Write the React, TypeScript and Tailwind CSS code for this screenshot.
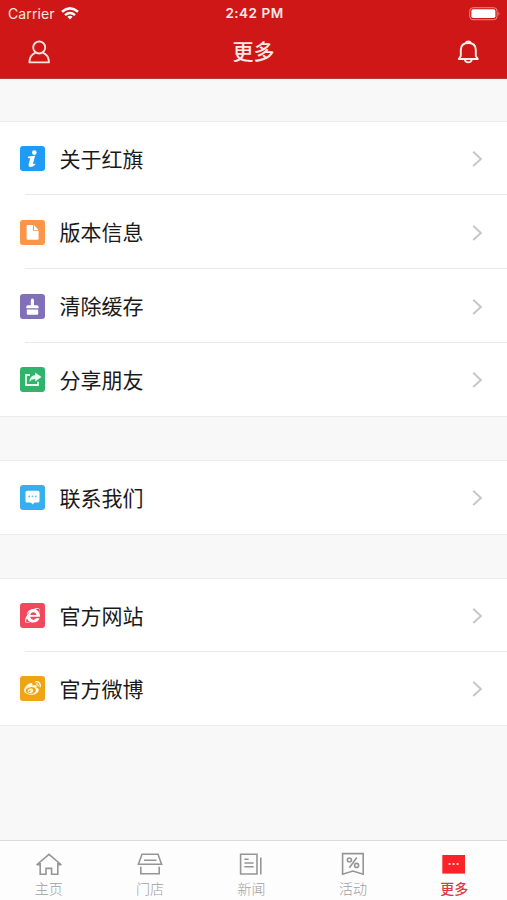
import React from 'react';
import { FaInternetExplorer, FaWeibo } from 'react-icons/fa';

interface MenuItem {
    label: string;
    color: string;
    height: string;
    icon: React.ReactNode;
}

interface TabItem {
    label: string;
    icon: React.ReactNode;
    active?: boolean;
}

const InfoIcon = () => (
    <svg className="w-[25px] h-[25px]" viewBox="0 0 25 25" fill="#fff">
        <circle cx="14.3" cy="6.6" r="2.3" />
        <path d="M8.1 10.6 L15.1 9.8 L13.1 17.6 Q12.9 18.7 13.9 18.2 L15.4 17.4 L15.2 18.7 Q12.8 21 10.5 21 Q8.1 20.8 8.7 18.3 L10.2 12.5 L7.9 12.1 Z" />
    </svg>
);

const FileIcon = () => (
    <svg className="w-[25px] h-[25px]" viewBox="0 0 25 25" fill="#fff">
        <path d="M7 5 H13 V10.8 H18.6 V18.8 Q18.6 19.8 17.6 19.8 H7.6 Q6.6 19.8 6.6 18.8 V5.6 Q6.6 5 7 5 Z" />
        <path d="M14 5 L18.6 10 H14 Z" />
    </svg>
);

const BrushIcon = () => (
    <svg className="w-[25px] h-[25px]" viewBox="0 0 25 25" fill="#fff">
        <path d="M10.8 6.2 Q10.8 4.6 12.4 4.6 Q14 4.6 14 6.2 V11.2 H17 Q18.6 11.2 18.6 12.8 V14.2 H6.3 V12.8 Q6.3 11.2 7.9 11.2 H10.8 Z" />
        <path d="M6.8 15.6 H18.2 V19.8 Q18.2 20.8 17.2 20.8 H7.8 Q6.8 20.8 6.8 19.8 Z" />
    </svg>
);

const ShareIcon = () => (
    <svg className="w-[25px] h-[25px]" viewBox="0 0 25 25" fill="none">
        <path d="M10 8 H6 V18 H18 V14.7" stroke="#e9fbef" strokeWidth="1.8" />
        <path d="M15.2 5.5 L21.5 10 L15.2 14.5 V12 Q11.5 11.9 9.3 14.9 Q9.9 8.6 15.2 8 Z" fill="#e9fbef" />
    </svg>
);

const ChatIcon = () => (
    <svg className="w-[25px] h-[25px]" viewBox="0 0 25 25">
        <path d="M7 5.8 H18 Q19.5 5.8 19.5 7.3 V16 Q19.5 17.5 18 17.5 H14.5 L12.7 19.4 L10.9 17.5 H7 Q5.5 17.5 5.5 16 V7.3 Q5.5 5.8 7 5.8 Z" fill="#fff" />
        <g fill="#67bde9">
            <circle cx="9.2" cy="11.4" r="0.9" />
            <circle cx="12.5" cy="11.4" r="0.9" />
            <circle cx="15.8" cy="11.4" r="0.9" />
        </g>
    </svg>
);

const Chevron = () => (
    <svg className="w-[11px] h-[17px] mr-[24px]" viewBox="0 0 11 17" fill="none" stroke="#c7c7c9" strokeWidth="2">
        <path d="M1.2 1.7 L8.9 8.9 L1.2 16.1" />
    </svg>
);

const groups: MenuItem[][] = [
    [
        { label: '关于红旗', color: 'bg-[#1f9bf5]', height: 'h-[73px]', icon: <InfoIcon /> },
        { label: '版本信息', color: 'bg-[#fb9549]', height: 'h-[74px]', icon: <FileIcon /> },
        { label: '清除缓存', color: 'bg-[#8170b8]', height: 'h-[74px]', icon: <BrushIcon /> },
        { label: '分享朋友', color: 'bg-[#30b46b]', height: 'h-[73px]', icon: <ShareIcon /> },
    ],
    [{ label: '联系我们', color: 'bg-[#35b0ec]', height: 'h-[73px]', icon: <ChatIcon /> }],
    [
        { label: '官方网站', color: 'bg-[#f2485e]', height: 'h-[73px]', icon: <FaInternetExplorer className="w-[15px] h-[15px]" /> },
        { label: '官方微博', color: 'bg-[#eda516]', height: 'h-[73px]', icon: <FaWeibo className="w-[17px] h-[17px] text-[#fff6dc]" /> },
    ],
];

const tabs: TabItem[] = [
    {
        label: '主页',
        icon: (
            <path d="M1.5 13 L14 2.3 L26.5 13 M5.2 11 V22.2 H11 V16.4 H16.6 V22.2 H22.8 V11 M1.8 12.6 H5.2 M22.8 12.6 H26.2" />
        ),
    },
    {
        label: '门店',
        icon: <path d="M6 2.3 H22 L25.6 12.2 H2.4 Z M8 8.2 H20.5 M4.8 14.8 V21.7 H23.2 V14.8" />,
    },
    {
        label: '新闻',
        icon: <path d="M3.6 2.2 H20 V22 H3.6 Z M23.8 5.5 V22.4 M7.4 7.2 H11.6 M7.4 11 H16.6 M7.4 14.8 H16.6" />,
    },
    {
        label: '活动',
        icon: (
            <>
                <path d="M3.6 1.6 H24.2 V22.2 L13.9 19 L3.6 22.2 Z M17.8 5.5 L10.4 15.8" />
                <circle cx="10.4" cy="8" r="2" />
                <circle cx="17.6" cy="13.4" r="2" />
            </>
        ),
    },
    {
        label: '更多',
        active: true,
        icon: (
            <>
                <rect x="2.3" y="3" width="22.7" height="18.6" fill="#fb2327" stroke="none" />
                <path d="M8.6 12 H10.6 M12.6 12 H14.6 M16.6 12 H18.6" stroke="#ffd0d0" strokeWidth="1.8" />
            </>
        ),
    },
];

function StatusBar() {
    return (
        <div className="h-[27px] flex items-center justify-between pl-[8px] pr-[6px] font-['Inter','Liberation_Sans',sans-serif]">
            <div className="w-[120px] flex items-center gap-[6px]">
                <span className="text-[14px] leading-none tracking-[0.1px] text-[#ffe3df]">Carrier</span>
                <svg className="w-[18px] h-[13px]" viewBox="0 0 18 13" fill="none" stroke="#fff" strokeWidth="2.5">
                    <path d="M1 4.7 Q9 -1.9 17 4.7" />
                    <path d="M4 8.1 Q9 4 14 8.1" />
                    <path d="M6.4 9.8 Q9 7.6 11.6 9.8 L9 12.6 Z" fill="#fff" stroke="none" />
                </svg>
            </div>
            <span className="text-[13.5px] leading-none font-semibold tracking-[0.5px] text-[#ffe9e6]">2:42 PM</span>
            <div className="w-[120px] flex justify-end">
                <svg className="w-[32px] h-[14px]" viewBox="0 0 32 14">
                    <rect x="0.7" y="0.7" width="27.4" height="12" rx="3.4" fill="none" stroke="#ee8c88" strokeWidth="1" />
                    <rect x="2.4" y="2.3" width="24" height="8.8" rx="1.8" fill="#fff" />
                    <path d="M29.5 4.7 Q31.4 6.7 29.5 8.7 Z" fill="#ee8c88" />
                </svg>
            </div>
        </div>
    );
}

function MenuGroup({ items }: { items: MenuItem[] }) {
    return (
        <section className="bg-white border-y border-[#ebebeb]">
            {items.map((item, index) => (
                <div key={item.label} className={`${item.height} flex items-center`}>
                    <div className={`w-[25px] h-[25px] ml-[20px] rounded-[3px] shrink-0 flex items-center justify-center text-white ${item.color}`}>
                        {item.icon}
                    </div>
                    <div className="relative flex-1 h-full flex items-center justify-between pl-[14.5px]">
                        <span className="pt-[1px] text-[21px] leading-none text-[#1a1a1a]">{item.label}</span>
                        <Chevron />
                        {index < items.length - 1 && <div className="absolute bottom-0 -left-[20px] right-0 h-px bg-[#e9e9e9]" />}
                    </div>
                </div>
            ))}
        </section>
    );
}

export default function App() {
    return (
        <div className="w-[507px] h-[900px] overflow-hidden flex flex-col bg-[#f8f8f8] font-['Liberation_Sans','Noto_Sans_CJK_SC',sans-serif]">
            <header className="h-[79px] shrink-0 bg-[#cf1717] border-b border-[#b93a3a]">
                <StatusBar />
                <div className="h-[50px] flex items-center justify-between pl-[27px] pr-[27px]">
                    <svg className="w-[24px] h-[24px]" viewBox="0 0 24 24" fill="none" stroke="#ffe3df" strokeWidth="1.8" strokeLinejoin="round">
                        <circle cx="12.2" cy="7.5" r="6" />
                        <path d="M8.5 12.6 Q2.6 15 2.4 22.4 H22 Q21.8 15 15.9 12.6" />
                    </svg>
                    <h1 className="pb-[1px] text-[21px] leading-none font-medium text-[#ffe9e6]">更多</h1>
                    <svg className="w-[24px] h-[26px]" viewBox="0 0 24 26" fill="none" stroke="#fff0ed" strokeWidth="1.9" strokeLinejoin="round">
                        <path d="M2.8 20 H21.8 L19.8 17 V10.5 Q19.4 4 12.3 4 Q5.2 4 4.8 10.5 V17 Z" />
                        <path d="M9.8 4 Q10.2 2.4 12.3 2.4 Q14.4 2.4 14.8 4" />
                        <path d="M8.8 20.4 Q9.3 23.4 12.3 23.4 Q15.3 23.4 15.8 20.4" />
                    </svg>
                </div>
            </header>

            <main className="flex-1 flex flex-col gap-[43px] pt-[42px]">
                {groups.map((items) => (
                    <MenuGroup key={items[0].label} items={items} />
                ))}
            </main>

            <nav className="h-[60px] shrink-0 bg-[#fdfdfd] border-t border-[#dcdcdc]">
                <div className="grid grid-cols-5 -ml-[2px] w-[507px] pt-[11px]">
                    {tabs.map((tab) => (
                        <div key={tab.label} className="flex flex-col items-center gap-[6px]">
                            <svg className="w-[28px] h-[24px]" viewBox="0 0 28 24" fill="none" stroke="#969696" strokeWidth="1.6">
                                {tab.icon}
                            </svg>
                            <span className={`text-[14px] leading-none ${tab.active ? 'font-medium text-[#dc3b3e]' : 'font-light text-[#a0a0a0]'}`}>{tab.label}</span>
                        </div>
                    ))}
                </div>
            </nav>
        </div>
    );
}
